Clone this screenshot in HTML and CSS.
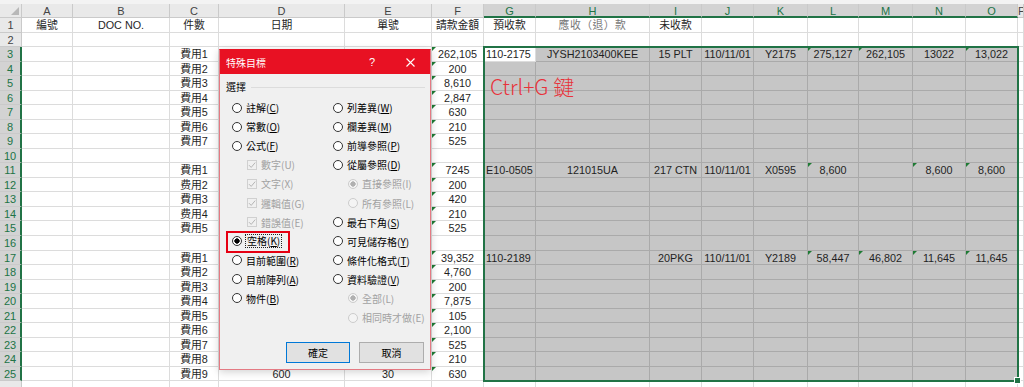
FILE: index.html
```html
<html lang="zh-Hant">

<head>
    <meta charset="utf-8" />
    <title>特殊目標 - 空格</title>
    <link rel="stylesheet" href="styles.css">
</head>

<body>
    <div class="page">
        <div class="topbar"></div>
        <div class="sheet"></div>

        <!-- selection outline G3:O25 -->
        <div class="selection"><span class="fill-handle"></span></div>

        <div class="note">Ctrl+G 鍵</div>

        <div class="dialog">
            <div class="dialog-title">
                <span class="dialog-name">特殊目標</span>
                <span class="dialog-help">?</span>
                <span class="dialog-close">
                    <svg width="9" height="9" viewBox="0 0 9 9">
                        <path d="M0.5 0.5 L8.5 8.5 M8.5 0.5 L0.5 8.5" stroke="#fff" stroke-width="1.1" />
                    </svg>
                </span>
            </div>
            <div class="dialog-body">
                <div class="group-label"><span>選擇</span></div>
                <div class="options">
                    <div class="opt"><span class="radio"></span><span>註解(<u>C</u>)</span></div>
                    <div class="opt"><span class="radio"></span><span>列差異(<u>W</u>)</span></div>

                    <div class="opt"><span class="radio"></span><span>常數(<u>O</u>)</span></div>
                    <div class="opt"><span class="radio"></span><span>欄差異(<u>M</u>)</span></div>

                    <div class="opt"><span class="radio"></span><span>公式(<u>F</u>)</span></div>
                    <div class="opt"><span class="radio"></span><span>前導參照(<u>P</u>)</span></div>

                    <div class="opt opt-sub opt-off">
                        <svg class="check" width="10" height="10" viewBox="0 0 10 10">
                            <rect x="0.5" y="0.5" width="9" height="9" fill="none" stroke="#d0d0d0" />
                            <polyline points="2,5.2 4.2,7.4 8.2,2.6" fill="none" stroke="#b4b4b4" />
                        </svg><span>數字(U)</span>
                    </div>
                    <div class="opt"><span class="radio"></span><span>從屬參照(<u>D</u>)</span></div>

                    <div class="opt opt-sub opt-off">
                        <svg class="check" width="10" height="10" viewBox="0 0 10 10">
                            <rect x="0.5" y="0.5" width="9" height="9" fill="none" stroke="#d0d0d0" />
                            <polyline points="2,5.2 4.2,7.4 8.2,2.6" fill="none" stroke="#b4b4b4" />
                        </svg><span>文字(X)</span>
                    </div>
                    <div class="opt opt-sub opt-off"><span class="radio radio-off radio-dot"></span><span>直接參照(I)</span></div>

                    <div class="opt opt-sub opt-off">
                        <svg class="check" width="10" height="10" viewBox="0 0 10 10">
                            <rect x="0.5" y="0.5" width="9" height="9" fill="none" stroke="#d0d0d0" />
                            <polyline points="2,5.2 4.2,7.4 8.2,2.6" fill="none" stroke="#b4b4b4" />
                        </svg><span>邏輯值(G)</span>
                    </div>
                    <div class="opt opt-sub opt-off"><span class="radio radio-off"></span><span>所有參照(L)</span></div>

                    <div class="opt opt-sub opt-off">
                        <svg class="check" width="10" height="10" viewBox="0 0 10 10">
                            <rect x="0.5" y="0.5" width="9" height="9" fill="none" stroke="#d0d0d0" />
                            <polyline points="2,5.2 4.2,7.4 8.2,2.6" fill="none" stroke="#b4b4b4" />
                        </svg><span>錯誤值(E)</span>
                    </div>
                    <div class="opt"><span class="radio"></span><span>最右下角(<u>S</u>)</span></div>

                    <div class="opt"><span class="radio radio-on"></span><span class="focus">空格(<u>K</u>)</span></div>
                    <div class="opt"><span class="radio"></span><span>可見儲存格(<u>Y</u>)</span></div>

                    <div class="opt"><span class="radio"></span><span>目前範圍(<u>R</u>)</span></div>
                    <div class="opt"><span class="radio"></span><span>條件化格式(<u>T</u>)</span></div>

                    <div class="opt"><span class="radio"></span><span>目前陣列(<u>A</u>)</span></div>
                    <div class="opt"><span class="radio"></span><span>資料驗證(<u>V</u>)</span></div>

                    <div class="opt"><span class="radio"></span><span>物件(<u>B</u>)</span></div>
                    <div class="opt opt-sub opt-off"><span class="radio radio-off radio-dot"></span><span>全部(L)</span></div>

                    <div class="opt"></div>
                    <div class="opt opt-sub opt-off"><span class="radio radio-off"></span><span>相同時才做(E)</span></div>
                </div>
                <div class="buttons">
                    <button class="btn btn-default">確定</button>
                    <button class="btn btn-cancel">取消</button>
                </div>
            </div>
        </div>

        <!-- red box drawn round the chosen option -->
        <div class="highlight"></div>
    </div>

    <script>
        // Column letters, first slot is the row-number column, P is only a sliver on the right
        const letters = ' ABCDEFGHIJKLMNOP';

        // Cell values by row, keyed by column letter
        const data = {
            1: { A: '編號', B: 'DOC NO.', C: '件數', D: '日期', E: '單號', F: '請款金額', G: '預收款', H: '應收（退）款', I: '未收款' },
            3: { C: '費用1', F: '262,105', G: '110-2175', H: 'JYSH2103400KEE', I: '15 PLT', J: '110/11/01', K: 'Y2175', L: '275,127', M: '262,105', N: '13022', O: '13,022' },
            4: { C: '費用2', F: '200' },
            5: { C: '費用3', F: '8,610' },
            6: { C: '費用4', F: '2,847' },
            7: { C: '費用5', F: '630' },
            8: { C: '費用6', F: '210' },
            9: { C: '費用7', F: '525' },
            11: { C: '費用1', F: '7245', G: 'E10-0505', H: '121015UA', I: '217 CTN', J: '110/11/01', K: 'X0595', L: '8,600', N: '8,600', O: '8,600' },
            12: { C: '费用2', F: '200' },
            13: { C: '費用3', F: '420' },
            14: { C: '费用4', F: '210' },
            15: { C: '費用5', F: '525' },
            17: { C: '費用1', F: '39,352', G: '110-2189', I: '20PKG', J: '110/11/01', K: 'Y2189', L: '58,447', M: '46,802', N: '11,645', O: '11,645' },
            18: { C: '費用2', F: '4,760' },
            19: { C: '費用3', F: '200' },
            20: { C: '費用4', F: '7,875' },
            21: { C: '費用5', F: '105' },
            22: { C: '費用6', F: '2,100' },
            23: { C: '費用7', F: '525' },
            24: { C: '費用8', F: '210' },
            25: { C: '費用9', D: '600', E: '30', F: '630' }
        };

        // Numbers stored as text get the little green corner
        const marked = ['D3', 'E3', 'L3', 'M3', 'O3', 'L11', 'N11', 'O11', 'L17', 'M17', 'N17', 'O17'];

        const sheet = document.querySelector('.sheet');

        for (let r = 0; r <= 26; r++) {
            for (let c = 0; c < letters.length; c++) {
                const cell = document.createElement('div');
                const col = letters[c];
                const inCols = c >= 7 && c <= 15;
                const inRows = r >= 3 && r <= 25;

                if (r === 0 && c === 0) {
                    cell.className = 'corner';
                } else if (r === 0) {
                    cell.className = inCols ? 'head head-on' : 'head';
                    cell.textContent = col;
                } else if (c === 0) {
                    cell.className = inRows ? 'rowhead rowhead-on' : 'rowhead';
                    // row 26 only peeks in at the bottom edge, leave its number out
                    if (r < 26) cell.textContent = r;
                } else {
                    const value = (data[r] || {})[col] || '';
                    let cls = 'cell';
                    if (inCols && inRows && !(r === 3 && col === 'G')) cls += ' cell-sel';
                    if (col === 'G' && r >= 3) cls += ' cell-left';
                    if (r === 1 && col === 'H') cls += ' cell-faint';
                    if (value && ((col === 'F' && r >= 3) || marked.includes(col + r))) cls += ' cell-mark';
                    cell.className = cls;
                    cell.textContent = value;
                }
                sheet.appendChild(cell);
            }
        }
    </script>
</body>

</html>
```

FILE: styles.css
```css
body {
    margin: 0;
    overflow: hidden;
    background: #ffffff;
    font-family: "Liberation Sans", "Noto Sans CJK TC", sans-serif;
}

.page {
    position: relative;
    width: 1024px;
    height: 387px;
    overflow: hidden;
}

.topbar {
    height: 4px;
    background: #f3f3f3;
}

/* spreadsheet grid */

.sheet {
    display: grid;
    grid-template-columns: 22px 51px 97px 49px 126px 87px 52px 52px 114px 52px 52px 54px 51px 54px 53px 52px 6px;
    grid-template-rows: 14px;
    grid-auto-rows: 14.54px;
}

.corner,
.head,
.rowhead {
    box-sizing: border-box;
    background: #e9e9e9;
    border-right: 1px solid #cacaca;
    border-bottom: 1px solid #cacaca;
    color: #444444;
    font-size: 11px;
    line-height: 14px;
    text-align: center;
    overflow: hidden;
}

.corner {
    position: relative;
}

.corner::after {
    content: '';
    position: absolute;
    right: 2px;
    bottom: 2px;
    border-bottom: 8px solid #b8b8b8;
    border-left: 8px solid transparent;
}

.head-on {
    background: #d3d3d3;
    color: #217346;
    border-bottom: 2px solid #217346;
}

.rowhead {
    line-height: 14.5px;
}

.rowhead-on {
    background: #d3d3d3;
    color: #217346;
    border-right: 2px solid #217346;
}

.cell {
    position: relative;
    box-sizing: border-box;
    border-right: 1px solid #dcdcdc;
    border-bottom: 1px solid #dcdcdc;
    color: #1f1f1f;
    font-size: 10.8px;
    line-height: 15px;
    text-align: center;
    white-space: nowrap;
    overflow: hidden;
}

.cell-sel {
    background: #c6c6c6;
    border-color: #aaaaaa;
}

.cell-left {
    text-align: left;
    padding-left: 2px;
}

.cell-faint {
    color: #777777;
    letter-spacing: 0.5px;
}

.cell-mark::before {
    content: '';
    position: absolute;
    left: 0;
    top: 0;
    border-top: 4px solid #1e7b34;
    border-right: 4px solid transparent;
}

/* overlays */

.selection {
    position: absolute;
    left: 483px;
    top: 46px;
    width: 536px;
    height: 336px;
    box-sizing: border-box;
    border: 2px solid #217346;
}

.fill-handle {
    position: absolute;
    right: -4px;
    bottom: -4px;
    width: 5px;
    height: 5px;
    background: #217346;
    border: 1px solid #ffffff;
}

.note {
    position: absolute;
    left: 490px;
    top: 76px;
    color: #e8323a;
    font-family: "Noto Sans CJK TC", "Noto Sans", sans-serif;
    font-weight: 300;
    font-size: 21px;
    line-height: 21px;
    white-space: nowrap;
}

/* dialog */

.dialog {
    position: absolute;
    left: 219px;
    top: 49px;
    width: 212px;
    height: 321px;
    box-sizing: border-box;
    display: flex;
    flex-direction: column;
    background: #f0f0f0;
    border: 1px solid #e47a83;
    border-top-color: #e81123;
    box-shadow: 0 2px 8px rgba(0, 0, 0, 0.18);
    font-family: "Noto Sans CJK TC", sans-serif;
    font-size: 10px;
    color: #000000;
}

.dialog-title {
    height: 24px;
    display: flex;
    align-items: center;
    background: #e81123;
    color: #ffffff;
    padding-left: 6px;
}

.dialog-name {
    flex: 1;
    font-size: 10px;
}

.dialog-help {
    width: 36px;
    text-align: center;
    font-family: "Liberation Sans", sans-serif;
    font-size: 11px;
}

.dialog-close {
    width: 40px;
    height: 24px;
    display: flex;
    align-items: center;
    justify-content: center;
}

.dialog-body {
    flex: 1;
    display: flex;
    flex-direction: column;
    padding: 6px 5px 6px 6px;
}

.group-label {
    display: flex;
    align-items: center;
    gap: 5px;
    height: 14px;
    line-height: 14px;
}

.group-label::after {
    content: '';
    flex: 1;
    border-top: 1px solid #dcdcdc;
}

.options {
    display: grid;
    grid-template-columns: 101px 1fr;
    grid-auto-rows: 19.1px;
    margin-top: 4px;
    padding-left: 6px;
}

.opt {
    display: flex;
    align-items: center;
    gap: 4px;
    white-space: nowrap;
}

.opt u {
    text-decoration-thickness: 1px;
    text-underline-offset: 1px;
}

.opt-sub {
    padding-left: 15px;
}

.opt-off {
    color: #a2a2a2;
}

.radio {
    width: 10px;
    height: 10px;
    box-sizing: border-box;
    border: 1px solid #333333;
    border-radius: 50%;
    background: #ffffff;
    flex: none;
}

.radio-on {
    background: radial-gradient(circle, #000000 0 2.4px, #ffffff 2.9px);
}

.radio-off {
    border-color: #cccccc;
    background: #f4f4f4;
}

.radio-dot {
    background: radial-gradient(circle, #b0b0b0 0 2.4px, #f4f4f4 2.9px);
}

.check {
    flex: none;
}

.focus {
    outline: 1px dotted #222222;
    padding: 0 1px;
    line-height: 12px;
}

.buttons {
    display: flex;
    justify-content: flex-end;
    gap: 9px;
    margin-top: auto;
    padding-right: 1px;
}

.btn {
    height: 21px;
    box-sizing: border-box;
    background: #e1e1e1;
    border: 1px solid #adadad;
    font-family: "Noto Sans CJK TC", sans-serif;
    font-size: 10px;
    color: #000000;
    padding: 0;
}

.btn-default {
    width: 64px;
    border-color: #0078d7;
}

.btn-cancel {
    width: 65px;
}

.highlight {
    position: absolute;
    left: 226px;
    top: 231px;
    width: 64px;
    height: 22px;
    box-sizing: border-box;
    border: 2px solid #e60012;
}
```
